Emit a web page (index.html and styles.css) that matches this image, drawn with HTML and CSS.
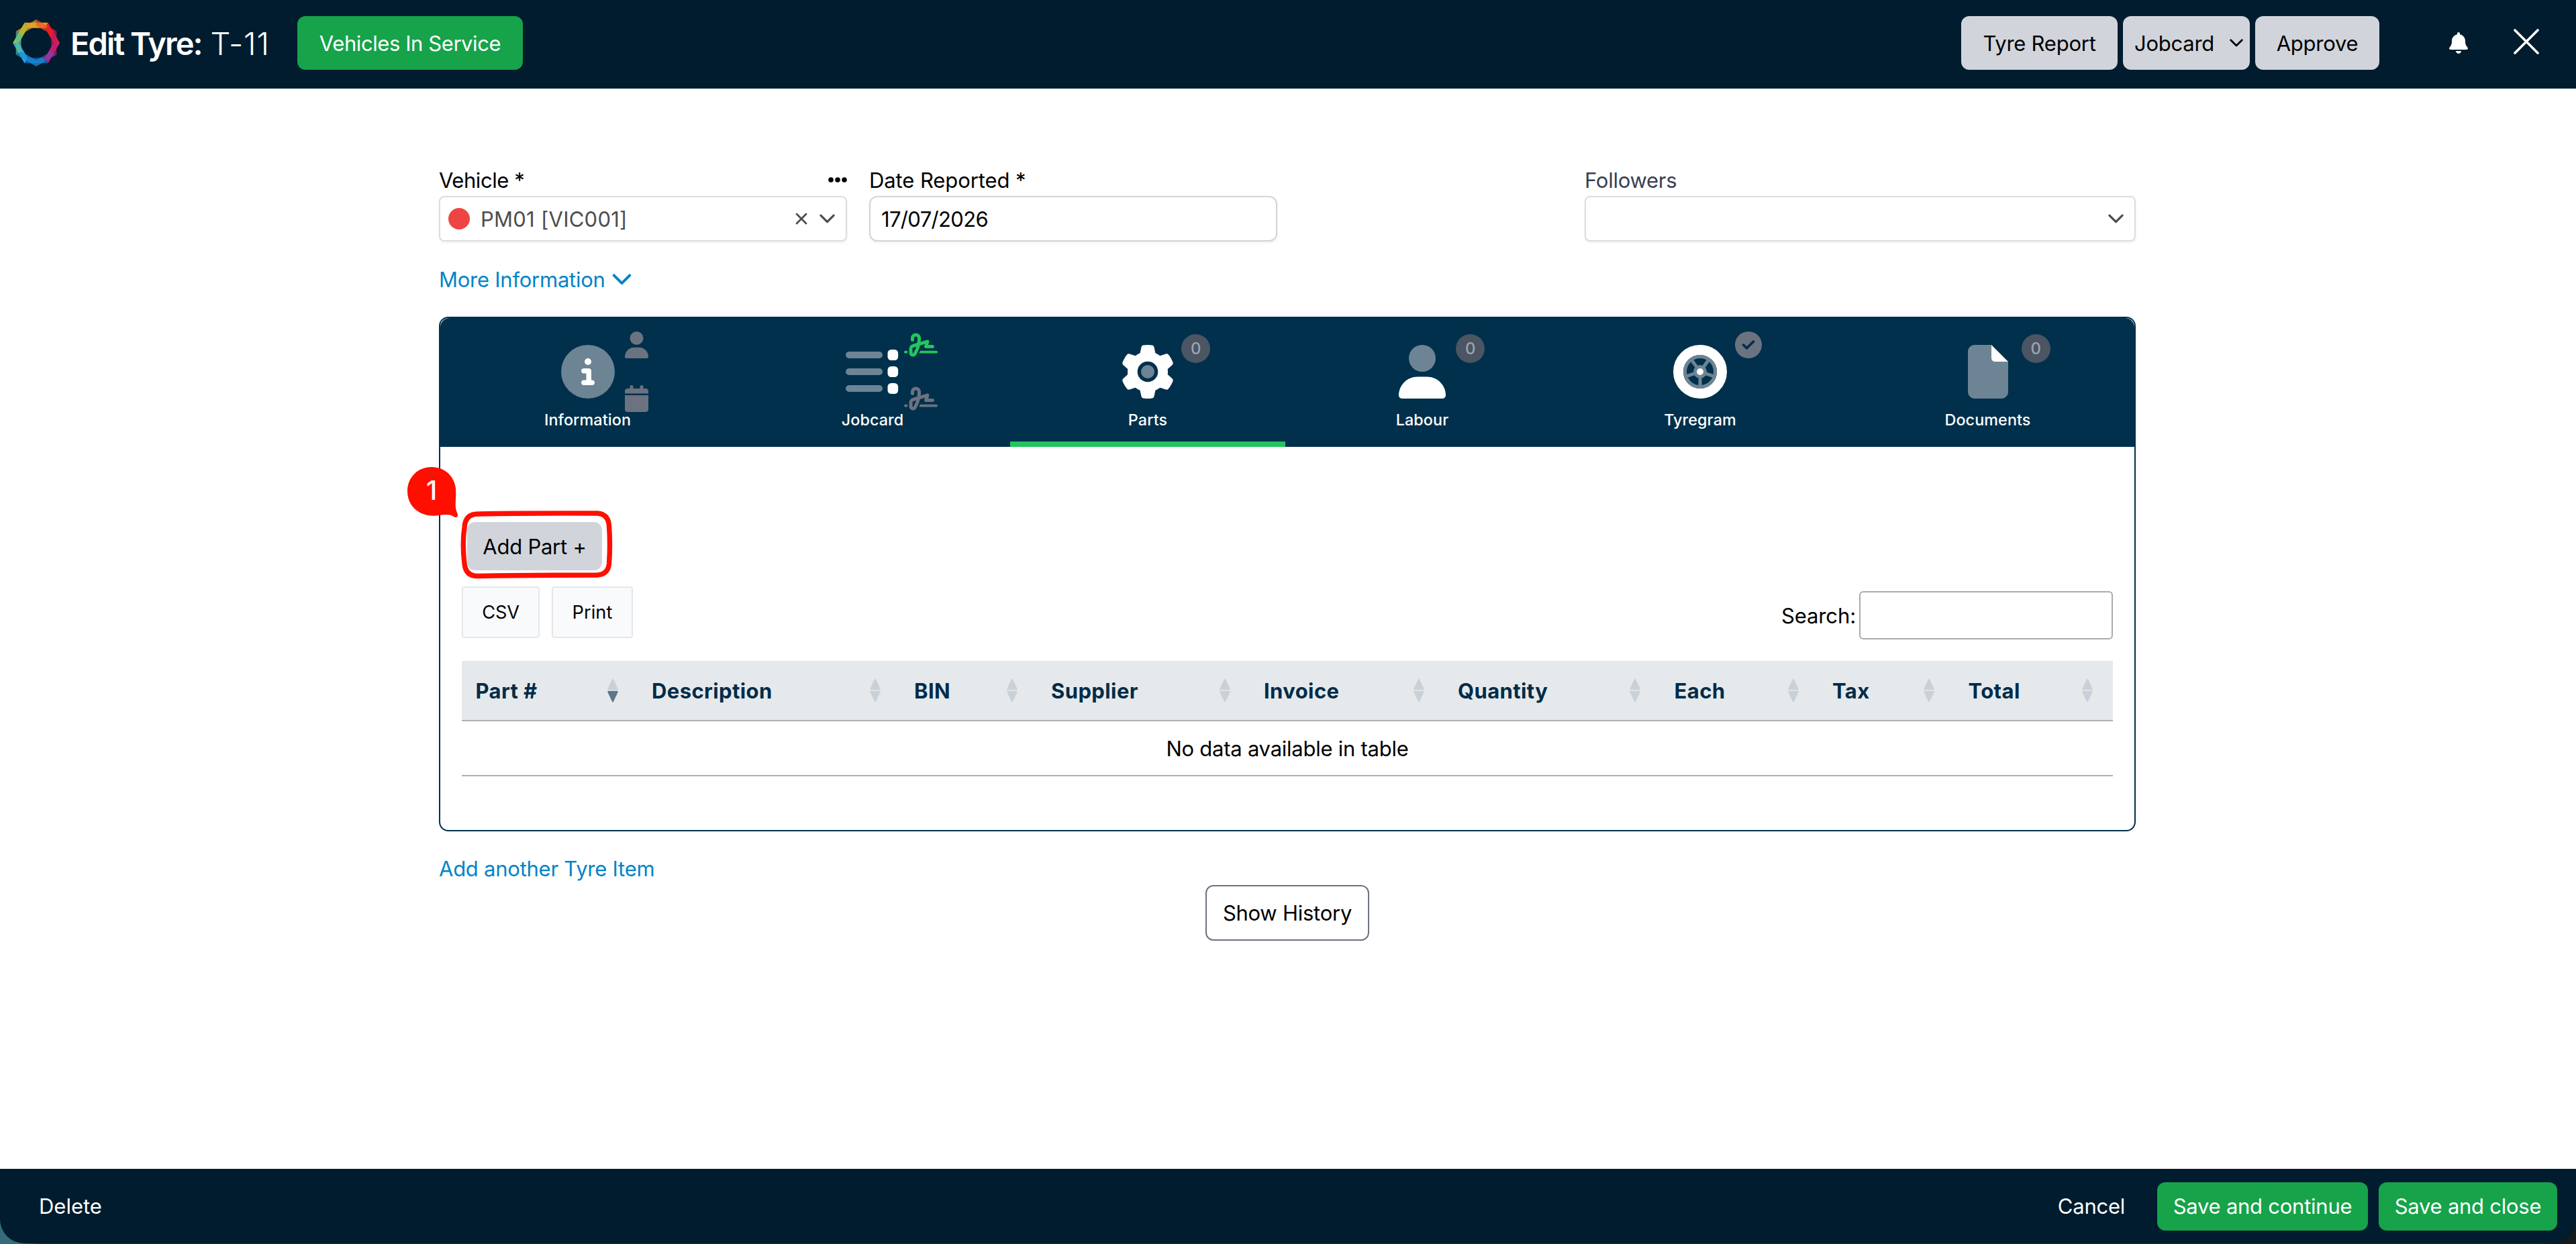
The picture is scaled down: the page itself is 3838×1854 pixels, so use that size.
FILE: index.html
```html
<!DOCTYPE html>
<html lang="en">
<head>
    <meta charset="utf-8">
    <title>Edit Tyre: T-11</title>
    <link rel="stylesheet" href="styles.css">
</head>
<body>
    <svg class="defs" width="0" height="0">
        <symbol id="signature" viewBox="0 0 640 512">
            <path d="M192 128c0-17.7 14.3-32 32-32s32 14.3 32 32v7.8c0 27.7-2.4 55.3-7.1 82.5l-84.4 25.3c-40.6 12.2-68.4 49.6-68.4 92v71.9c0 40 32.5 72.5 72.5 72.5c26 0 50-13.9 62.9-36.5l13.9-24.3c26.8-47 46.5-97.7 58.4-150.5l94.4-28.3-12.5 37.5c-3.3 9.8-1.6 20.5 4.4 28.8s15.7 13.3 26 13.3H544c17.7 0 32-14.3 32-32s-14.3-32-32-32H460.4l18-53.9c3.8-11.3 .9-23.8-7.4-32.4s-20.7-11.8-32.2-8.4L316.4 198.1c2.4-20.7 3.6-41.4 3.6-62.3V128c0-53-43-96-96-96s-96 43-96 96v32c0 17.7 14.3 32 32 32s32-14.3 32-32V128zm-9.2 177l49-14.7c-10.4 33.8-24.5 66.4-42.1 97.2l-13.9 24.3c-1.5 2.6-4.3 4.3-7.4 4.3c-4.7 0-8.5-3.8-8.5-8.5V335.6c0-14.1 9.3-26.6 22.8-30.7zM24 368c-13.3 0-24 10.7-24 24s10.7 24 24 24H64.3c-.2-2.8-.3-5.6-.3-8.5V368H24zm592 48c13.3 0 24-10.7 24-24s-10.7-24-24-24H305.9c-6.7 16.3-14.2 32.3-22.3 48H616z"/>
        </symbol>
        <symbol id="chevron" viewBox="0 0 20 12">
            <path d="M1.7 1.7 10 10l8.3-8.3" fill="none" stroke="currentColor" stroke-width="2.8" stroke-linecap="round" stroke-linejoin="round"/>
        </symbol>
        <symbol id="sort" viewBox="0 0 16 36">
            <path d="M7 1.2q1-1.6 2 0l6.6 14.2q.6 1.8-1.2 1.8H1.6Q-.2 17.2 .4 15.4z"/>
            <path class="sort-down" d="M7 34.8q1 1.6 2 0l6.6-14.2q.6-1.8-1.2-1.8H1.6Q-.2 18.8 .4 20.6z"/>
        </symbol>
    </svg>

    <header class="topbar">
        <svg class="logo" viewBox="0 0 70 70">
            <g>
                <path fill="#f7941d" d="M17.5 4.7h35l-4.6 8H22.1z"/>
                <path fill="#ed1c24" d="M52.5 4.7 70 35h-9.2L47.9 12.7z"/>
                <path fill="#c81b8a" d="M70 35 52.5 65.3l-4.6-8L60.8 35z"/>
                <path fill="#0b5aa6" d="M52.5 65.3h-35l4.6-8h25.8z"/>
                <path fill="#29abe2" d="M17.5 65.3 0 35h9.2l12.9 22.3z"/>
                <path fill="#8dc63f" d="M0 35 17.5 4.7l4.6 8L9.2 35z"/>
            </g>
            <g opacity=".72">
                <path fill="#f05a28" d="M35 0 52.5 10.1l-4.6 6.6L35 9.2z"/>
                <path fill="#e8202c" d="M52.5 10.1l12.8 7.4-8 4.6-9.4-5.4z"/>
                <path fill="#c4176a" d="M65.3 17.5v35l-8-4.6V22.1z"/>
                <path fill="#7b45a4" d="M65.3 52.5 48 62.5l-4-6.9 13.3-7.7z"/>
                <path fill="#1e8fd8" d="M48 62.5 35 70 4.7 52.5l8-4.6L35 60.8l9-5.2z"/>
                <path fill="#5fb99a" d="M4.7 52.5v-35l8 4.6v25.8z"/>
                <path fill="#d9a52c" d="M4.7 17.5 35 0v9.2L12.7 22.1z"/>
            </g>
        </svg>
        <h1 class="title">Edit Tyre: <span class="title-id">T-11</span></h1>
        <button class="btn btn-green btn-service">Vehicles In Service</button>
        <div class="topbar-actions">
            <button class="btn btn-grey btn-report">Tyre Report</button>
            <button class="btn btn-grey btn-jobcard">Jobcard <svg class="chev-sm"><use href="#chevron"/></svg></button>
            <button class="btn btn-grey btn-approve">Approve</button>
        </div>
        <svg class="bell" viewBox="0 0 448 512"><path fill="#fff" d="M224 0c-17.7 0-32 14.3-32 32V51.2C119 66 64 130.6 64 208v18.8c0 47-17.3 92.4-48.5 127.6l-7.4 8.3c-8.4 9.4-10.4 22.9-5.3 34.4S19.4 416 32 416H416c12.6 0 24-7.4 29.2-18.9s3.1-25-5.3-34.4l-7.4-8.3C401.3 319.2 384 273.9 384 226.8V208c0-77.4-55-142-128-156.8V32c0-17.7-14.3-32-32-32zm45.3 493.3c12-12 18.7-28.3 18.7-45.3H160c0 17 6.7 33.3 18.7 45.3s28.3 18.7 45.3 18.7s33.3-6.7 45.3-18.7z"/></svg>
        <svg class="close" viewBox="0 0 38 38"><path d="M2 2l34 34M36 2 2 36" stroke="#fff" stroke-width="3.6" stroke-linecap="round"/></svg>
    </header>

    <main class="main">
        <div class="fields">
            <div class="field">
                <div class="label">Vehicle *
                    <svg class="dots" viewBox="0 0 28 8"><circle cx="4" cy="4" r="3.8"/><circle cx="14" cy="4" r="3.8"/><circle cx="24" cy="4" r="3.8"/></svg>
                </div>
                <div class="select">
                    <span class="status"></span>
                    <span class="select-text">PM01 [VIC001]</span>
                    <svg class="clear" viewBox="0 0 18 18"><path d="M2 2l14 14M16 2 2 16" stroke="currentColor" stroke-width="2.8" stroke-linecap="round"/></svg>
                    <svg class="chev"><use href="#chevron"/></svg>
                </div>
            </div>
            <div class="field">
                <div class="label label-date">Date Reported *</div>
                <input class="input" type="text" value="17/07/2026">
            </div>
            <div class="field field-followers">
                <div class="label label-grey">Followers</div>
                <div class="select select-wide">
                    <svg class="chev"><use href="#chevron"/></svg>
                </div>
            </div>
        </div>

        <a class="link more">More Information <svg class="chev-more"><use href="#chevron"/></svg></a>

        <section class="panel">
            <nav class="tabs">
                <div class="tab">
                    <div class="tab-icon">
                        <svg viewBox="0 0 512 512"><circle cx="256" cy="256" r="256" fill="#6d8494"/><path fill="#fff" d="M216 336h24V272H216c-13.3 0-24-10.7-24-24s10.7-24 24-24h48c13.3 0 24 10.7 24 24v88h8c13.3 0 24 10.7 24 24s-10.7 24-24 24H216c-13.3 0-24-10.7-24-24s10.7-24 24-24zm40-208a32 32 0 1 1 0 64 32 32 0 1 1 0-64z"/></svg>
                        <svg class="mini mini-user" viewBox="0 0 448 512"><circle cx="224" cy="128" r="128"/><path d="M178.3 304C79.8 304 0 383.8 0 482.3C0 498.7 13.3 512 29.7 512H418.3c16.4 0 29.7-13.3 29.7-29.7C448 383.8 368.2 304 269.7 304H178.3z"/></svg>
                        <svg class="mini mini-date" viewBox="0 0 448 512"><path d="M96 32V64H48C21.5 64 0 85.5 0 112v48H448V112c0-26.5-21.5-48-48-48H352V32c0-17.7-14.3-32-32-32s-32 14.3-32 32V64H160V32c0-17.7-14.3-32-32-32S96 14.3 96 32zM448 192H0V464c0 26.5 21.5 48 48 48H400c26.5 0 48-21.5 48-48V192z"/></svg>
                    </div>
                    <div class="tab-label">Information</div>
                </div>
                <div class="tab">
                    <div class="tab-icon">
                        <svg viewBox="0 0 512 512">
                            <g fill="#6d8494"><rect y="64" width="352" height="64" rx="32"/><rect y="224" width="352" height="64" rx="32"/><rect y="384" width="352" height="64" rx="32"/></g>
                            <g fill="#fff"><rect x="400" y="45" width="100" height="102" rx="34"/><rect x="400" y="205" width="100" height="102" rx="34"/><rect x="400" y="365" width="100" height="102" rx="34"/></g>
                        </svg>
                        <svg class="mini mini-sign sign-on"><use href="#signature"/></svg>
                        <svg class="mini mini-sign sign-off"><use href="#signature"/></svg>
                    </div>
                    <div class="tab-label">Jobcard</div>
                </div>
                <div class="tab active">
                    <div class="tab-icon">
                        <svg viewBox="0 0 512 512"><path fill="#fff" d="M495.9 166.6c3.2 8.7 .5 18.4-6.4 24.6l-43.3 39.4c1.1 8.3 1.7 16.8 1.7 25.4s-.6 17.1-1.7 25.4l43.3 39.4c6.9 6.2 9.6 15.9 6.4 24.6c-4.4 11.9-9.7 23.3-15.8 34.3l-4.7 8.1c-6.6 11-14 21.4-22.1 31.2c-5.9 7.2-15.7 9.6-24.5 6.8l-55.7-17.7c-13.4 10.3-28.2 18.9-44 25.4l-12.5 57.1c-2 9.1-9 16.3-18.2 17.8c-13.8 2.3-28 3.5-42.5 3.5s-28.7-1.2-42.5-3.5c-9.2-1.5-16.2-8.7-18.2-17.8l-12.5-57.1c-15.8-6.5-30.6-15.1-44-25.4L83.1 425.9c-8.8 2.8-18.6 .3-24.5-6.8c-8.1-9.8-15.5-20.2-22.1-31.2l-4.7-8.1c-6.1-11-11.4-22.4-15.8-34.3c-3.2-8.7-.5-18.4 6.4-24.6l43.3-39.4C64.6 273.1 64 264.6 64 256s.6-17.1 1.7-25.4L22.4 191.2c-6.9-6.2-9.6-15.9-6.4-24.6c4.4-11.9 9.7-23.3 15.8-34.3l4.7-8.1c6.6-11 14-21.4 22.1-31.2c5.9-7.2 15.7-9.6 24.5-6.8l55.7 17.7c13.4-10.3 28.2-18.9 44-25.4l12.5-57.1c2-9.1 9-16.3 18.2-17.8C227.3 1.2 241.5 0 256 0s28.7 1.2 42.5 3.5c9.2 1.5 16.2 8.7 18.2 17.8l12.5 57.1c15.8 6.5 30.6 15.1 44 25.4l55.7-17.7c8.8-2.8 18.6-.3 24.5 6.8c8.1 9.8 15.5 20.2 22.1 31.2l4.7 8.1c6.1 11 11.4 22.4 15.8 34.3z"/><circle cx="256" cy="256" r="98" fill="#00304b"/><circle cx="256" cy="256" r="64" fill="#6d8494"/></svg>
                        <span class="badge">0</span>
                    </div>
                    <div class="tab-label">Parts</div>
                </div>
                <div class="tab">
                    <div class="tab-icon">
                        <svg viewBox="-32 0 512 512"><circle cx="224" cy="128" r="128" fill="#6d8494"/><path fill="#fff" d="M178.3 304C79.8 304 0 383.8 0 482.3C0 498.7 13.3 512 29.7 512H418.3c16.4 0 29.7-13.3 29.7-29.7C448 383.8 368.2 304 269.7 304H178.3z"/></svg>
                        <span class="badge">0</span>
                    </div>
                    <div class="tab-label">Labour</div>
                </div>
                <div class="tab">
                    <div class="tab-icon">
                        <svg viewBox="-40 -40 80 80">
                            <circle r="32.5" fill="none" stroke="#fff" stroke-width="15"/>
                            <circle r="22.5" fill="none" stroke="#6d8494" stroke-width="5"/>
                            <g stroke="#6d8494" stroke-width="5">
                                <path d="M0 7V22"/>
                                <path d="M0 7V22" transform="rotate(72)"/>
                                <path d="M0 7V22" transform="rotate(144)"/>
                                <path d="M0 7V22" transform="rotate(216)"/>
                                <path d="M0 7V22" transform="rotate(288)"/>
                            </g>
                            <circle r="7.5" fill="#fff" stroke="#6d8494" stroke-width="5"/>
                        </svg>
                        <svg class="mini mini-check" viewBox="0 0 512 512"><path d="M256 512A256 256 0 1 0 256 0a256 256 0 1 0 0 512zM369 209L241 337c-9.4 9.4-24.6 9.4-33.9 0l-64-64c-9.4-9.4-9.4-24.6 0-33.9s24.6-9.4 33.9 0l47 47L335 175c9.4-9.4 24.6-9.4 33.9 0s9.4 24.6 0 33.9z"/></svg>
                    </div>
                    <div class="tab-label">Tyregram</div>
                </div>
                <div class="tab">
                    <div class="tab-icon">
                        <svg viewBox="-64 0 512 512"><path fill="#6d8494" d="M0 64C0 28.7 28.7 0 64 0H224V128c0 17.7 14.3 32 32 32H384V448c0 35.3-28.7 64-64 64H64c-35.3 0-64-28.7-64-64V64z"/><path fill="#fff" d="M384 160H256c-17.7 0-32-14.3-32-32V0L384 160z"/></svg>
                        <span class="badge">0</span>
                    </div>
                    <div class="tab-label">Documents</div>
                </div>
            </nav>

            <div class="content">
                <div class="add-part">
                    <button class="btn btn-grey btn-add">Add Part +</button>
                    <svg class="callout" viewBox="0 0 320 180">
                        <path fill="none" stroke="#ff0f00" stroke-width="7.4" d="M112 76Q200 74.500 290 75Q306.500 76 307.500 94Q309.500 121 307.500 150Q306 166 290 167Q200 167 112 168.500Q94 169 92 150Q88.500 120 92 96Q93 76 112 76z"/>
                        <path fill="#ff0f00" d="M43 6C63 6 77 20 79 38C80 50 78 60 79 67C80 73 82 75 82 78C82 81 79 82 76 80C70 76 62 77 54 78C30 82 7 68 7 42C7 21 23 6 43 6z"/>
                        <text class="callout-num" x="43" y="55" text-anchor="middle">1</text>
                    </svg>
                </div>

                <div class="toolbar">
                    <button class="tool tool-csv">CSV</button>
                    <button class="tool tool-print">Print</button>
                    <label class="search">Search:<input class="search-input" type="text"></label>
                </div>

                <table class="table">
                    <colgroup>
                        <col class="c-part"><col class="c-desc"><col class="c-bin"><col class="c-supplier"><col class="c-invoice"><col class="c-qty"><col class="c-each"><col class="c-tax"><col class="c-total">
                    </colgroup>
                    <thead>
                        <tr>
                            <th class="sorted"><div class="th">Part #<svg class="sort"><use href="#sort"/></svg></div></th>
                            <th><div class="th">Description<svg class="sort"><use href="#sort"/></svg></div></th>
                            <th><div class="th">BIN<svg class="sort"><use href="#sort"/></svg></div></th>
                            <th><div class="th">Supplier<svg class="sort"><use href="#sort"/></svg></div></th>
                            <th><div class="th">Invoice<svg class="sort"><use href="#sort"/></svg></div></th>
                            <th><div class="th">Quantity<svg class="sort"><use href="#sort"/></svg></div></th>
                            <th><div class="th">Each<svg class="sort"><use href="#sort"/></svg></div></th>
                            <th><div class="th">Tax<svg class="sort"><use href="#sort"/></svg></div></th>
                            <th><div class="th">Total<svg class="sort"><use href="#sort"/></svg></div></th>
                        </tr>
                    </thead>
                    <tbody>
                        <tr>
                            <td colspan="9">No data available in table</td>
                        </tr>
                    </tbody>
                </table>
            </div>
        </section>

        <a class="link another">Add another Tyre Item</a>
        <button class="history">Show History</button>
    </main>

    <div class="backdrop">
        <footer class="footer">
            <a class="foot-link">Delete</a>
            <a class="foot-link cancel">Cancel</a>
            <button class="btn btn-green btn-continue">Save and continue</button>
            <button class="btn btn-green btn-close">Save and close</button>
        </footer>
    </div>
</body>
</html>
```

FILE: styles.css
```css
* {
    box-sizing: border-box;
}

body {
    margin: 0;
    height: 1854px;
    display: flex;
    flex-direction: column;
    overflow: hidden;
    background: #fff;
    color: #000;
    font-family: Inter, "Liberation Sans", sans-serif;
    font-size: 31px;
    letter-spacing: -0.25px;
}

button,
input {
    font: inherit;
    letter-spacing: inherit;
    color: inherit;
    margin: 0;
    padding: 0;
}

svg {
    display: block;
    flex: none;
}

.defs {
    position: absolute;
}

/* top bar */
.topbar {
    display: flex;
    align-items: center;
    flex: none;
    height: 132px;
    padding: 0 55px 4px 19px;
    background: #001c2e;
}

.logo {
    width: 70px;
    height: 70px;
}

.title {
    width: 338px;
    margin: 0 0 0 16px;
    color: #fff;
    font-size: 47px;
    font-weight: 600;
    letter-spacing: -1.9px;
    white-space: nowrap;
}

.title-id {
    margin-left: 3px;
    font-weight: 300;
    letter-spacing: 0.9px;
}

.btn {
    border: none;
    border-radius: 12px;
    white-space: nowrap;
}

.btn-green {
    background: #16a34a;
    color: #fff;
}

.btn-grey {
    background: #d1d5db;
}

.btn-service {
    width: 336px;
    height: 80px;
    letter-spacing: -0.42px;
}

.topbar-actions {
    display: flex;
    gap: 8px;
    margin-left: auto;
}

.btn-report,
.btn-jobcard,
.btn-approve {
    width: 233px;
    height: 80px;
}

.btn-jobcard {
    display: flex;
    align-items: center;
    justify-content: space-between;
    width: 189px;
    padding: 0 10px 0 17px;
}

.btn-approve {
    width: 185px;
}

.chev-sm {
    width: 20px;
    height: 12px;
}

.bell {
    width: 28px;
    height: 32px;
    margin-left: 104px;
}

.close {
    width: 38px;
    height: 38px;
    margin: 0 0 5px 68px;
}

/* form */
.main {
    flex: 1;
    display: flex;
    flex-direction: column;
    align-items: flex-start;
    width: 2528px;
    margin-left: 654px;
    padding-top: 112px;
}

.fields {
    display: flex;
    gap: 33px;
    width: 100%;
}

.field {
    width: 608px;
}

.field-followers {
    width: 821px;
    margin-left: auto;
}

.label {
    display: flex;
    align-items: center;
    justify-content: space-between;
    height: 48px;
    letter-spacing: -0.45px;
}

.label-date {
    letter-spacing: -0.1px;
}

.label-grey {
    color: #374151;
    letter-spacing: -0.25px;
}

.dots {
    width: 28px;
    height: 8px;
}

.select,
.input {
    display: flex;
    align-items: center;
    width: 100%;
    height: 68px;
    border: 2px solid #dcdde2;
    border-radius: 8px;
    background: #fff;
    box-shadow: 0 2px 4px rgba(0, 0, 0, 0.06);
}

.select {
    padding: 0 16px 0 12px;
    color: #4d4d4d;
}

.input {
    padding: 0 16px;
    border-color: #d1d5db;
    border-radius: 12px;
    letter-spacing: -0.65px;
}

.status {
    width: 32px;
    height: 32px;
    margin-right: 16px;
    border-radius: 50%;
    background: #ef4444;
}

.select-text {
    letter-spacing: 0.25px;
}

.clear {
    width: 18px;
    height: 18px;
    margin-left: auto;
    margin-right: 18px;
}

.chev {
    width: 23px;
    height: 14px;
}

.select-wide {
    justify-content: flex-end;
}

.link {
    color: #0284c7;
}

.more {
    display: flex;
    align-items: center;
    gap: 10px;
    height: 48px;
    margin: 32px 0;
}

.chev-more {
    width: 29px;
    height: 17px;
}

/* tab panel */
.panel {
    width: 100%;
    border: 2px solid #00304b;
    border-radius: 14px;
}

.tabs {
    display: grid;
    grid-template-columns: 439px 410px 410px 408px 420px 437px;
    height: 192px;
    border-radius: 14px 14px 0 0;
    background: #00304b;
    color: #fff;
}

.tab {
    display: flex;
    flex-direction: column;
    align-items: center;
    height: 192px;
    padding-top: 40px;
}

.tab.active {
    border-bottom: 8px solid #22c55e;
}

.tab-icon {
    position: relative;
    width: 80px;
    height: 80px;
}

.tab-label {
    margin-top: 14px;
    font-size: 23.3px;
    font-weight: 500;
    line-height: 36px;
    letter-spacing: 0.12px;
}

.mini {
    position: absolute;
    fill: #6b7280;
}

.mini-user,
.mini-date {
    left: 95px;
    width: 35px;
    height: 40px;
}

.mini-sign {
    left: 87px;
    width: 50px;
    height: 40px;
}

.mini-user,
.sign-on,
.mini-check {
    top: -20px;
}

.mini-date,
.sign-off {
    top: 60px;
}

.sign-on {
    fill: #22c55e;
}

.mini-check {
    left: 92px;
    width: 40px;
    height: 40px;
}

.badge {
    position: absolute;
    left: 90px;
    top: -16px;
    width: 43px;
    height: 43px;
    border-radius: 50%;
    background: #4b5563;
    color: #9ca3af;
    font-size: 24px;
    font-weight: 500;
    line-height: 44px;
    text-align: center;
}

.content {
    padding: 112px 32px 80px;
}

.add-part {
    position: relative;
    width: 201px;
    margin-left: 8px;
}

.btn-add {
    display: block;
    width: 201px;
    height: 72px;
}

/* numbered marker drawn over the button */
.callout {
    position: absolute;
    left: -96px;
    top: -88px;
    width: 320px;
    height: 180px;
}

.callout-num {
    fill: #fff;
    font-size: 39px;
    font-weight: 500;
}

.toolbar {
    display: flex;
    gap: 18px;
    height: 79px;
    margin: 24px 0 32px;
}

.tool {
    width: 116px;
    height: 77px;
    border: 2px solid #e5e7eb;
    border-radius: 4px;
    background: #f9fafb;
    font-size: 27.2px;
}

.tool-print {
    width: 121px;
    letter-spacing: 0.1px;
}

.search {
    display: flex;
    align-items: center;
    gap: 5px;
    height: 72px;
    margin: 7px 0 0 auto;
    letter-spacing: -0.1px;
}

.search-input {
    width: 378px;
    height: 72px;
    border: 2px solid #aaa;
    border-radius: 6px;
    background: #fff;
}

.table {
    width: 2460px;
    table-layout: fixed;
    border-collapse: separate;
    border-spacing: 0;
}

.c-part { width: 262.5px; }
.c-desc { width: 391px; }
.c-bin { width: 204px; }
.c-supplier { width: 317px; }
.c-invoice { width: 289px; }
.c-qty { width: 322.5px; }
.c-each { width: 235.5px; }
.c-tax { width: 202.5px; }
.c-total { width: 236px; }

.table th {
    height: 90px;
    padding: 0;
    border-bottom: 2px solid #b0b0b0;
    background: #e5e9ec;
    color: #002c48;
    font-weight: 700;
    letter-spacing: 0.4px;
}

.th {
    display: flex;
    align-items: center;
    justify-content: space-between;
    padding: 0 30px 0 20.5px;
}

.sort {
    width: 16px;
    height: 36px;
    fill: #c9d1d8;
    --down: #c9d1d8;
}

.sort-down {
    fill: var(--down);
}

.sorted .sort {
    --down: #5f7687;
}

.table td {
    height: 82px;
    padding: 0;
    border-bottom: 2px solid #b0b0b0;
    text-align: center;
}

.another {
    height: 48px;
    margin-top: 32px;
    line-height: 48px;
}

.history {
    align-self: center;
    width: 244px;
    height: 83px;
    border: 2px solid #6b7280;
    border-radius: 12px;
    background: #fff;
}

/* bottom bar */
.backdrop {
    flex: none;
    height: 112px;
    background: linear-gradient(to right, #356b7b 0, #356b7b 34px, #17323f 60px, #17323f 3780px, #161a1b 3800px);
}

.footer {
    display: flex;
    align-items: center;
    height: 111px;
    padding: 0 28px 0 58px;
    border-radius: 0 0 36px 36px;
    background: #001c2e;
    color: #fff;
}

.foot-link {
    letter-spacing: 0;
}

.cancel {
    margin: 0 48px 0 auto;
    letter-spacing: -0.25px;
}

.btn-continue,
.btn-close {
    width: 314px;
    height: 72px;
}

.btn-close {
    width: 266px;
    margin-left: 16px;
}
```
